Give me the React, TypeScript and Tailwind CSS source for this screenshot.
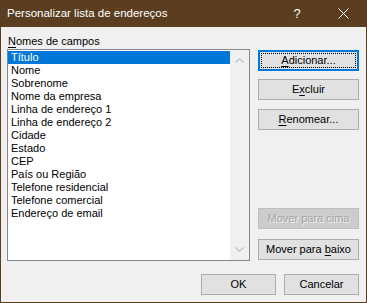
import React from 'react';

const campos = [
  'Título',
  'Nome',
  'Sobrenome',
  'Nome da empresa',
  'Linha de endereço 1',
  'Linha de endereço 2',
  'Cidade',
  'Estado',
  'CEP',
  'País ou Região',
  'Telefone residencial',
  'Telefone comercial',
  'Endereço de email',
];

function Chevron({ up }: { up?: boolean }) {
  return (
    <svg width="9" height="5" viewBox="0 0 9 5" className="block">
      <path
        d={up ? 'M0.5 4.5 L4.5 0.8 L8.5 4.5' : 'M0.5 0.5 L4.5 4.2 L8.5 0.5'}
        fill="none"
        stroke="#c1c1c1"
        strokeWidth="1.3"
      />
    </svg>
  );
}

function Btn({
  children,
  disabled,
  focused,
  className = '',
}: {
  children: React.ReactNode;
  disabled?: boolean;
  focused?: boolean;
  className?: string;
}) {
  if (disabled) {
    return (
      <div
        className={`h-[21px] flex items-center justify-center border border-[#bfbfbf] bg-[#cccccc] text-[#a3a3a3] [text-shadow:1px_1px_0_#f4f4f4] ${className}`}>
        {children}
      </div>
    );
  }
  if (focused) {
    return (
      <div
        className={`h-[21px] p-[2px] border border-[#0078d7] ring-1 ring-inset ring-[#0078d7] bg-[#e1e1e1] ${className}`}>
        <div className="h-full flex items-center justify-center border border-dotted border-black">
          {children}
        </div>
      </div>
    );
  }
  return (
    <div
      className={`h-[21px] flex items-center justify-center border border-[#adadad] bg-[#e1e1e1] text-black ${className}`}>
      {children}
    </div>
  );
}

export default function App() {
  return (
    <div className="w-[367px] h-[303px] flex flex-col bg-[#f0f0f0] border-x border-b border-[#5b3d1f] text-[11px] text-black font-['Liberation_Sans',sans-serif] select-none">
      {/* barra de titulo */}
      <div className="h-[27px] shrink-0 flex items-center bg-[#5b3d1f] text-white">
        <span className="pl-[6px] text-[11.5px] flex-1">Personalizar lista de endereços</span>
        <span className="w-[46px] text-center text-[13px]">?</span>
        <span className="w-[46px] flex justify-center">
          <svg width="11" height="11" viewBox="0 0 11 11">
            <path d="M0.5 0.5 L10.5 10.5 M10.5 0.5 L0.5 10.5" stroke="#fff" strokeWidth="1" />
          </svg>
        </span>
      </div>

      <div className="flex-1 flex flex-col pl-[6px] pr-[7px] pt-[6px]">
        <div className="flex">
          {/* lista */}
          <div className="w-[243px] flex flex-col">
            <div className="h-[16px] leading-[16px] pl-[1px]">
              <u className="underline-offset-2">N</u>omes de campos
            </div>
            <div className="h-[212px] flex bg-white border border-[#828790]">
              <div className="flex-1 pt-[1px]">
                {campos.map((c, i) => (
                  <div
                    key={c}
                    className={`h-[13px] leading-[13px] pl-[3px] ${
                      i === 0 ? 'bg-[#0078d7] text-white' : ''
                    }`}>
                    {c}
                  </div>
                ))}
              </div>
              <div className="w-[19px] bg-[#f0f0f0] flex flex-col justify-between items-center py-[8px]">
                <Chevron up />
                <Chevron />
              </div>
            </div>
          </div>

          {/* botoes da direita */}
          <div className="ml-auto w-[101px] flex flex-col justify-between pt-[17px] pb-[1px]">
            <div className="flex flex-col gap-[8px]">
              <Btn focused>
                <span>
                  <u className="underline-offset-2">A</u>dicionar...
                </span>
              </Btn>
              <Btn>
                <span>
                  E<u className="underline-offset-2">x</u>cluir
                </span>
              </Btn>
              <Btn className="mt-[1px]">
                <span>
                  <u className="underline-offset-2">R</u>enomear...
                </span>
              </Btn>
            </div>
            <div className="flex flex-col gap-[10px]">
              <Btn disabled>Mover para cima</Btn>
              <Btn>
                <span>
                  Mover para <u className="underline-offset-2">b</u>aixo
                </span>
              </Btn>
            </div>
          </div>
        </div>

        {/* ok / cancelar */}
        <div className="flex justify-end gap-[8px] mt-[13px]">
          <Btn className="w-[75px]">OK</Btn>
          <Btn className="w-[75px]">Cancelar</Btn>
        </div>
      </div>
    </div>
  );
}
